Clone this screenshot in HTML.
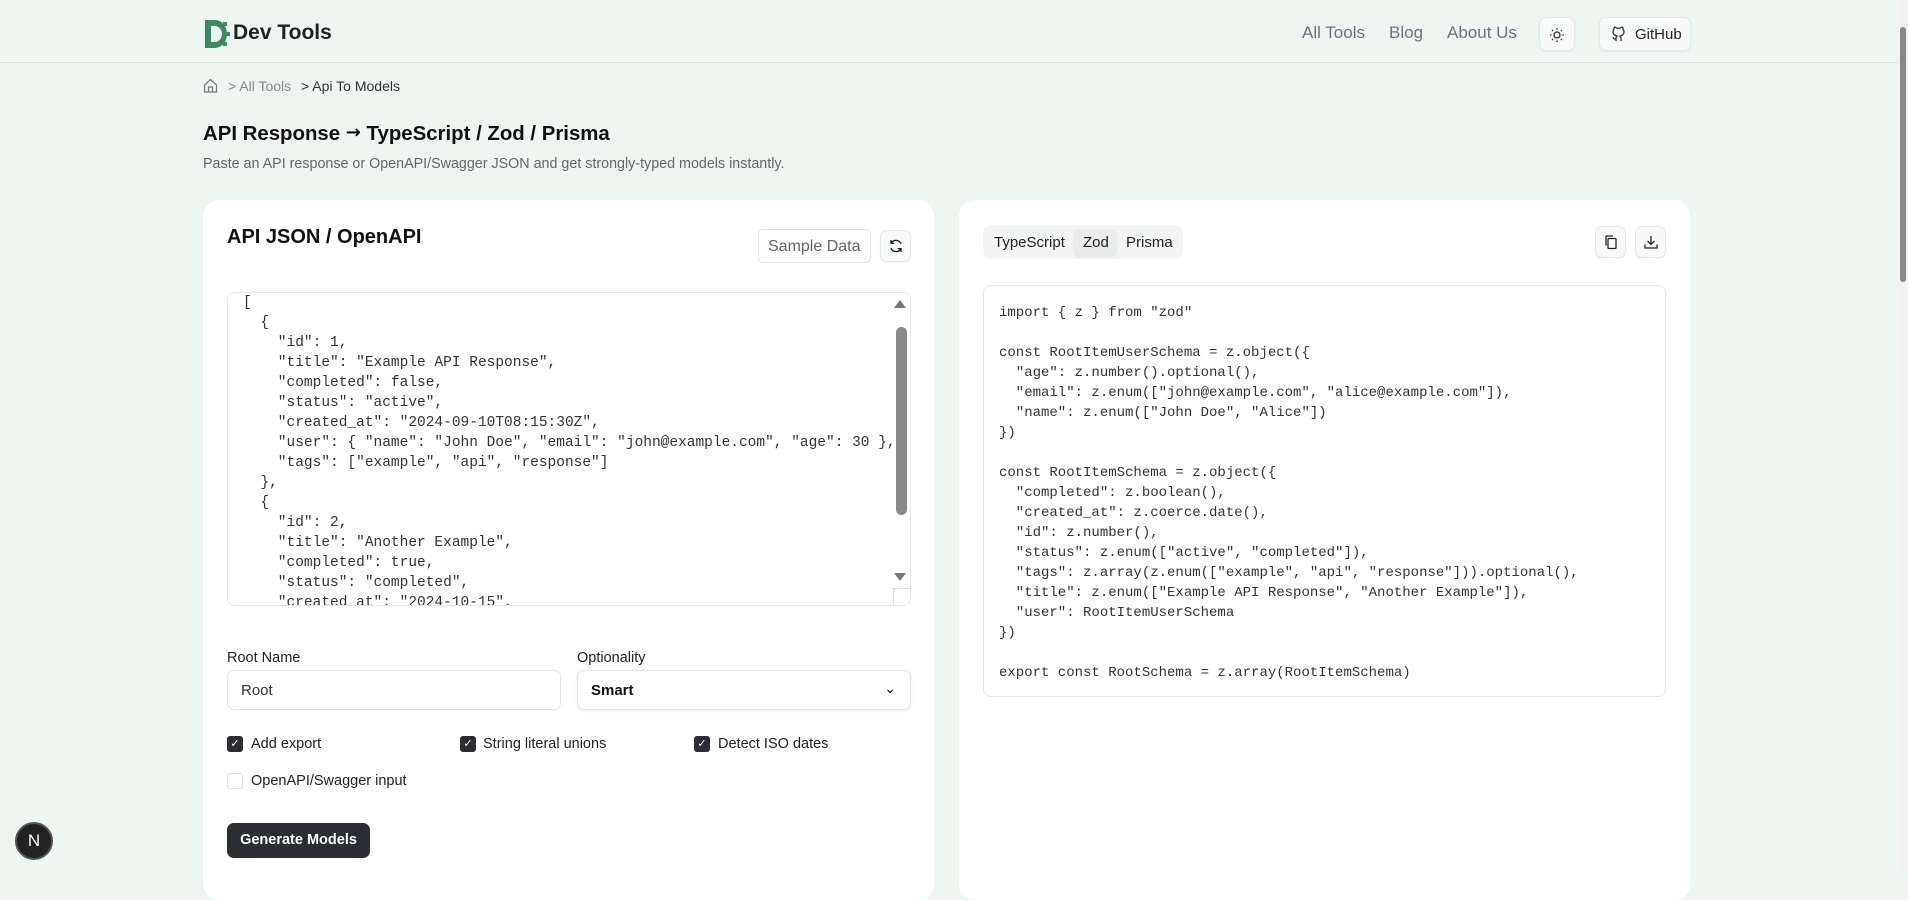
<!DOCTYPE html>
<html><head><meta charset="utf-8"><style>
*{box-sizing:border-box;margin:0;padding:0}
body{width:1908px;height:872px;overflow:hidden;background:#eef6f2;font-family:"Liberation Sans",sans-serif;color:#111;position:relative}
.a{position:absolute}
.hdr{left:0;top:0;width:1898px;height:63px;border-bottom:1px solid #dfe6e2}
.nav{font-size:17px;color:#6b7280;top:23px}
.btn{background:#f7faf8;border:1px solid #e3e8e5;border-radius:7px;box-shadow:0 1px 2px rgba(0,0,0,.05)}
.card{background:#fff;border-radius:16px;top:200px;width:731px;height:700px}
.mono{font-family:"Liberation Mono",monospace;font-size:14px;line-height:20px;white-space:pre;color:#333}
.cb{width:16px;height:16px;border-radius:3px;background:#2a2d31;color:#fff;font-size:11px;text-align:center;line-height:16px}
.lbl{font-size:14.5px;color:#222}
.sb{background:#f3f4f4}
</style></head><body>
<div class="a hdr"></div>
<svg class="a" style="left:203px;top:18px" width="27" height="32" viewBox="0 0 27 32"><path d="M2 2h10a12 14 0 0 1 0 28H2z" fill="#3d8a5e"/><path d="M8 8h4a7 8 0 0 1 0 16H8z" fill="#eef6f2"/><rect x="20" y="4" width="4" height="4" fill="#3d8a5e"/><rect x="23" y="14" width="4" height="4" fill="#3d8a5e"/><rect x="20" y="24" width="4" height="4" fill="#3d8a5e"/></svg>
<div class="a" style="left:233px;top:21px;font-size:21px;font-weight:bold;color:#222">Dev Tools</div>
<div class="a nav" style="left:1302px">All Tools</div>
<div class="a nav" style="left:1389px">Blog</div>
<div class="a nav" style="left:1447px">About Us</div>
<div class="a btn" style="left:1539px;top:17px;width:36px;height:34px"><svg style="margin:9px" width="16" height="16" viewBox="0 0 16 16" fill="none" stroke="#333" stroke-width="1.3"><circle cx="8" cy="8" r="3"/><path d="M8 1v1.5M8 13.5V15M1 8h1.5M13.5 8H15M3 3l1 1M12 12l1 1M3 13l1-1M12 4l1-1"/></svg></div>
<div class="a btn" style="left:1599px;top:17px;width:92px;height:34px;font-size:15px;color:#222;padding:8px 0 0 35px">GitHub</div>
<svg class="a" style="left:1611px;top:26px" width="15" height="16" viewBox="0 0 15 16" fill="none" stroke="#333" stroke-width="1.3"><path d="M5 15v-3c0-1 .5-1.5 1-2C3 9.5 2 8 2 6c0-1 .3-2 1-2.5C3 2.5 3 1.5 3.5 1 4.5 1 5.5 1.8 6 2.2a6 6 0 0 1 3 0C9.5 1.8 10.5 1 11.5 1c.5.5.5 1.5.5 2.5.7.5 1 1.5 1 2.5 0 2-1 3.5-4 4 .5.5 1 1 1 2v3M5 13c-2 .5-2.5-1-3.5-1.5"/></svg>
<svg class="a" style="left:203px;top:78px" width="15" height="15" viewBox="0 0 15 15" fill="none" stroke="#777" stroke-width="1.2"><path d="M1.5 7L7.5 1.5 13.5 7V14h-12z"/><path d="M5.5 14V9h4v5"/></svg>
<div class="a" style="left:228px;top:78px;font-size:14px;color:#888">&gt; All Tools</div>
<div class="a" style="left:301px;top:78px;font-size:14px;color:#333">&gt; Api To Models</div>
<div class="a" style="left:203px;top:123px;font-size:20.4px;font-weight:bold;color:#111">API Response <span style="font-family:'DejaVu Sans';font-size:18px;position:relative;top:-2px">→</span> TypeScript / Zod / Prisma</div>
<div class="a" style="left:203px;top:156px;font-size:14.3px;color:#666">Paste an API response or OpenAPI/Swagger JSON and get strongly-typed models instantly.</div>

<div class="a card" style="left:203px"></div>
<div class="a" style="left:227px;top:226px;font-size:20px;font-weight:bold;color:#111">API JSON / OpenAPI</div>
<div class="a" style="left:758px;top:229px;width:113px;height:34px;border:1px solid #e3e6e5;border-radius:5px;font-size:16px;color:#666;padding:8px 0 0 9px">Sample Data</div>
<div class="a btn" style="left:880px;top:230px;width:31px;height:32px"><svg style="margin:7px" width="16" height="16" viewBox="0 0 16 16" fill="none" stroke="#222" stroke-width="1.4"><path d="M13 6A5.5 5.5 0 0 0 3.2 5M3 10a5.5 5.5 0 0 0 9.8 1"/><path d="M3 2v3.3h3.3M13 14v-3.3H9.7"/></svg></div>
<div class="a" style="left:227px;top:292px;width:684px;height:314px;border:1px solid #e5e7e6;border-radius:8px;overflow:hidden">
<div class="mono" style="position:absolute;left:15px;top:0px;font-size:14.5px">[
  {
    "id": 1,
    "title": "Example API Response",
    "completed": false,
    "status": "active",
    "created_at": "2024-09-10T08:15:30Z",
    "user": { "name": "John Doe", "email": "john@example.com", "age": 30 },
    "tags": ["example", "api", "response"]
  },
  {
    "id": 2,
    "title": "Another Example",
    "completed": true,
    "status": "completed",
    "created_at": "2024-10-15",</div>
<div style="position:absolute;right:0;top:0;width:17px;height:100%;background:#fff"></div>
<div style="position:absolute;right:4px;top:7px;width:0;height:0;border-left:6px solid transparent;border-right:6px solid transparent;border-bottom:8px solid #777"></div>
<div style="position:absolute;right:3px;top:34px;width:11px;height:188px;background:#888;border-radius:6px"></div>
<div style="position:absolute;right:4px;top:280px;width:0;height:0;border-left:6px solid transparent;border-right:6px solid transparent;border-top:8px solid #777"></div>
<div style="position:absolute;right:0;bottom:0;width:17px;height:17px;border-left:1px solid #ddd;border-top:1px solid #ddd;background:#fff"></div>
</div>
<div class="a lbl" style="left:227px;top:650px">Root Name</div>
<div class="a lbl" style="left:577px;top:650px">Optionality</div>
<div class="a" style="left:227px;top:670px;width:334px;height:40px;border:1px solid #e3e6e5;border-radius:7px;font-size:15px;color:#333;padding:11px 0 0 13px">Root</div>
<div class="a" style="left:577px;top:670px;width:334px;height:40px;border:1px solid #e3e6e5;border-radius:7px;box-shadow:0 1px 3px rgba(0,0,0,.08);font-size:15px;font-weight:bold;color:#111;padding:11px 0 0 13px">Smart<span style="position:absolute;right:14px;top:9px;font-weight:normal;font-size:14px">&#8964;</span></div>
<div class="a cb" style="left:227px;top:736px">✓</div><div class="a lbl" style="left:251px;top:736px">Add export</div>
<div class="a cb" style="left:460px;top:736px">✓</div><div class="a lbl" style="left:483px;top:736px">String literal unions</div>
<div class="a cb" style="left:694px;top:736px">✓</div><div class="a lbl" style="left:718px;top:736px">Detect ISO dates</div>
<div class="a" style="left:227px;top:773px;width:16px;height:16px;border:1px solid #ddd;border-radius:3px"></div><div class="a lbl" style="left:251px;top:773px">OpenAPI/Swagger input</div>
<div class="a" style="left:227px;top:823px;width:143px;height:35px;background:#2a2d31;border-radius:7px;color:#fff;font-size:14.5px;font-weight:bold;text-align:center;line-height:35px">Generate Models</div>

<div class="a card" style="left:959px"></div>
<div class="a sb" style="left:983px;top:225px;width:200px;height:34px;border-radius:8px"></div>
<div class="a" style="left:1074px;top:229px;width:42px;height:27px;background:#e9eceb;border-radius:6px;box-shadow:0 1px 2px rgba(0,0,0,.08)"></div>
<div class="a" style="left:994px;top:234px;font-size:15px;color:#222">TypeScript</div>
<div class="a" style="left:1083px;top:234px;font-size:15px;color:#222">Zod</div>
<div class="a" style="left:1126px;top:234px;font-size:15px;color:#222">Prisma</div>
<div class="a btn" style="left:1595px;top:226px;width:31px;height:32px"><svg style="margin:7px" width="16" height="16" viewBox="0 0 16 16" fill="none" stroke="#222" stroke-width="1.3"><rect x="5" y="4.5" width="8" height="10" rx="1"/><path d="M3 11.5V3a1 1 0 0 1 1-1h6"/></svg></div>
<div class="a btn" style="left:1635px;top:226px;width:31px;height:32px"><svg style="margin:7px" width="16" height="16" viewBox="0 0 16 16" fill="none" stroke="#222" stroke-width="1.3"><path d="M8 2v8M4.5 7L8 10.5 11.5 7M2 10.5V14h12v-3.5"/></svg></div>
<div class="a" style="left:983px;top:285px;width:683px;height:412px;border:1px solid #e5e7e6;border-radius:8px"></div>
<div class="a mono" style="left:999px;top:303px">import { z } from "zod"

const RootItemUserSchema = z.object({
  "age": z.number().optional(),
  "email": z.enum(["john@example.com", "alice@example.com"]),
  "name": z.enum(["John Doe", "Alice"])
})

const RootItemSchema = z.object({
  "completed": z.boolean(),
  "created_at": z.coerce.date(),
  "id": z.number(),
  "status": z.enum(["active", "completed"]),
  "tags": z.array(z.enum(["example", "api", "response"])).optional(),
  "title": z.enum(["Example API Response", "Another Example"]),
  "user": RootItemUserSchema
})

export const RootSchema = z.array(RootItemSchema)</div>

<div class="a" style="left:15px;top:822px;width:38px;height:38px;border-radius:50%;background:#222;border:2px solid #555;color:#fff;font-size:17px;text-align:center;line-height:34px">N</div>
<div class="a" style="left:1898px;top:0;width:10px;height:872px;background:#f1f1f1"></div>
<div class="a" style="left:1900px;top:27px;width:6px;height:255px;background:#888;border-radius:3px"></div>
</body></html>
